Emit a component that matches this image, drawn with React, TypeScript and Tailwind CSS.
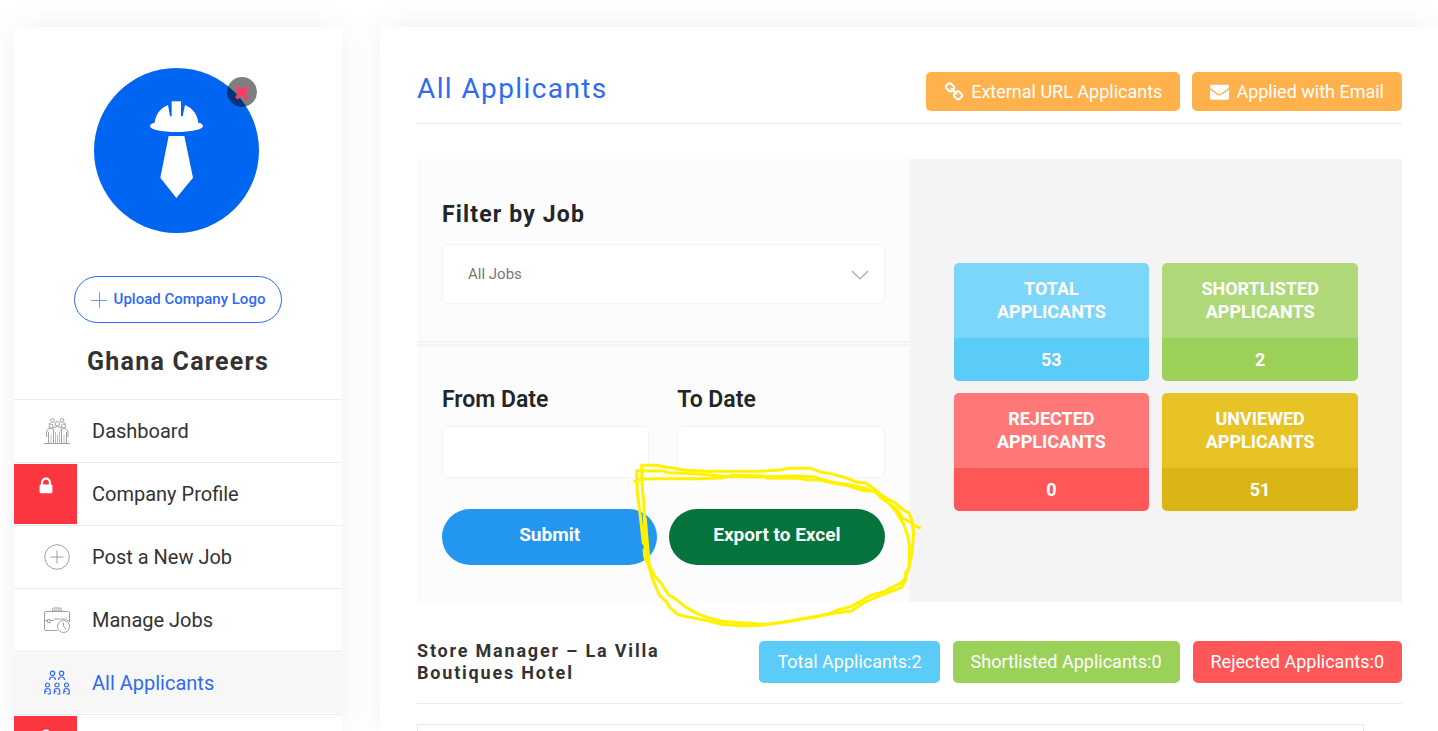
import type { ReactNode } from "react";

function FaGlyph({ d, className }: { d: string; className: string }) {
  return (
    <svg viewBox="0 0 1792 1792" fill="currentColor" aria-hidden="true" className={className}>
      <path d={d} />
    </svg>
  );
}

const LINK =
  "M1520 1216q0-40-28-68l-208-208q-28-28-68-28-42 0-72 32 3 3 19 18.5t21.5 21.5 15 19 13 25.5 3.5 27.5q0 40-28 68t-68 28q-15 0-27.5-3.5t-25.5-13-19-15-21.5-21.5-18.5-19q-33 31-33 73 0 40 28 68l206 207q27 27 68 27 40 0 68-26l147-146q28-28 28-67zm-703-705q0-40-28-68l-206-207q-28-28-68-28-39 0-68 27l-147 146q-28 28-28 67 0 40 28 68l208 208q27 27 68 27 42 0 72-31-3-3-19-18.5t-21.5-21.5-15-19-13-25.5-3.5-27.5q0-40 28-68t68-28q15 0 27.5 3.5t25.5 13 19 15 21.5 21.5 18.5 19q33-31 33-73zm895 705q0 120-85 203l-147 146q-83 83-203 83-121 0-204-85l-206-207q-83-83-83-203 0-123 88-209l-88-88q-86 88-208 88-120 0-204-84l-208-208q-84-84-84-204t85-203l147-146q83-83 203-83 121 0 204 85l206 207q83 83 83 203 0 123-88 209l88 88q86-88 208-88 120 0 204 84l208 208q84 84 84 204z";
const ENVELOPE =
  "M1792 710v794q0 66-47 113t-113 47h-1472q-66 0-113-47t-47-113v-794q44 49 101 87 362 246 497 345 57 42 92.5 65.5t94.5 48 110 24.5h2q51 0 110-24.5t94.5-48 92.5-65.5q170-123 498-345 57-39 100-87zm0-294q0 79-49 151t-122 123q-376 261-468 325-10 7-42.5 31t-54 38.5-52 32.5-57.5 27-50 9h-2q-23 0-50-9t-57.5-27-52-32.5-54-38.5-42.5-31q-91-64-262-182.5t-205-142.5q-62-42-117-115.5t-55-136.5q0-78 41.5-130t118.5-52h1472q65 0 112.5 47t47.5 113z";
const CLOSE =
  "M1490 1322q0 40-28 68l-136 136q-28 28-68 28t-68-28l-294-294-294 294q-28 28-68 28t-68-28l-136-136q-28-28-28-68t28-68l294-294-294-294q-28-28-28-68t28-68l136-136q28-28 68-28t68 28l294 294 294-294q28-28 68-28t68 28l136 136q28 28 28 68t-28 68l-294 294 294 294q28 28 28 68z";
const LOCK =
  "M640 768h512v-192q0-106-75-181t-181-75-181 75-75 181v192zm832 96v576q0 40-28 68t-68 28h-960q-40 0-68-28t-28-68v-576q0-40 28-68t68-28h32v-192q0-184 132-316t316-132 316 132 132 316v192h32q40 0 68 28t28 68z";

function CompanyLogo() {
  return (
    <svg viewBox="0 0 495 495" className="size-[165px]" role="img" aria-label="Ghana Careers">
      <circle cx="247.5" cy="247.5" r="247.5" fill="#0066f2" />
      <g fill="#fff">
        <path d="M168 174q0-8 14-10c3-24 16-43 40-53l6 34h5v-45h28v45h5l7-34c24 10 37 29 40 53q14 2 14 10c0 11-38 18-80 18s-79-7-79-18z" />
        <path d="M224 204h47l26 125-50 61-48-61z" />
      </g>
    </svg>
  );
}

function LineIcon({ children }: { children: ReactNode }) {
  return (
    <svg viewBox="0 0 26 26" className="size-[26px]" fill="none" stroke="currentColor" strokeWidth="1" aria-hidden="true">
      {children}
    </svg>
  );
}

function CrowdIcon() {
  return (
    <LineIcon>
      <path d="M0 25.5h26" />
      <circle cx="8.500" cy="2.500" r="1.800" />
      <circle cx="18" cy="2.500" r="1.800" />
      <circle cx="13.300" cy="5.800" r="2.200" />
      <circle cx="7" cy="8" r="2" />
      <circle cx="19.500" cy="8" r="2" />
      <path d="M2.500 19v-4.500Q2.500 10.500 7 10.500q2.500 0 3 2.500M24 19v-4.500q0-4-4.500-4-2.500 0-3 2.500M9 10q4.300-3 8.600 0M5.500 4.500v2M21 4.500v2" />
      <path d="M4.500 14v11.500M9.500 12v13.500M17.500 12v13.500M22.500 14v11.500" />
      <path d="M7 17v8.500M11.500 14v11.500M13.500 17v8.500M15.500 14v11.500M20 17v8.500" strokeWidth=".7" />
    </LineIcon>
  );
}

function PlusCircleIcon() {
  return (
    <LineIcon>
      <circle cx="13" cy="13" r="12.300" />
      <path d="M13 6.500v13M6.500 13h13" />
    </LineIcon>
  );
}

function BriefcaseClockIcon() {
  return (
    <LineIcon>
      <path d="M8.500 4.500v-2q0-1.500 1.500-1.500h6q1.500 0 1.500 1.500v2M10 4.500V3h6v1.500" />
      <path d="M13.500 23.500H2q-1.500 0-1.500-1.500V6Q.5 4.500 2 4.500h22.500q1 0 1 1.500v9.500" />
      <path d="M.5 13.500h2.500M6 13.500h4M10 12h13M23 13.500h2.500M3.500 12.500h2.500v3H3.500z" />
      <circle cx="19.500" cy="19.500" r="6" />
      <path d="M19.500 15.500v4l2.500 2.500" />
    </LineIcon>
  );
}

function Person({ x, y }: { x: number; y: number }) {
  return (
    <g transform={`translate(${x} ${y})`}>
      <circle cx="3.500" cy="2.500" r="2" />
      <path d="M.8 11.500V9q0-3 2.700-3t2.700 3v2.500H3.500M1 9h2" />
    </g>
  );
}

function TeamIcon() {
  return (
    <LineIcon>
      <g strokeWidth="1.200">
        <circle cx="8.500" cy="3.300" r="2.200" />
        <path d="M5.500 10q0-3 3-3t3 3" />
        <circle cx="17.500" cy="3.300" r="2.200" />
        <path d="M14.500 10q0-3 3-3t3 3" />
        <Person x={0} y={12.5} />
        <Person x={9.5} y={12.5} />
        <Person x={19} y={12.5} />
      </g>
    </LineIcon>
  );
}

type Item = { label: string; icon?: ReactNode; active?: boolean };

const items: Item[] = [
  { label: "Dashboard", icon: <CrowdIcon /> },
  { label: "Company Profile" },
  { label: "Post a New Job", icon: <PlusCircleIcon /> },
  { label: "Manage Jobs", icon: <BriefcaseClockIcon /> },
  { label: "All Applicants", icon: <TeamIcon />, active: true },
  { label: "" },
];

function NavItem({ label, icon, active }: Item) {
  return (
    <li className="border-t border-[#ebebeb] py-px">
      <a
        href="#"
        aria-label={label || "Locked"}
        className={`flex h-15 items-center text-xl ${active ? "bg-[#f7f7f7] text-[#2f6af5]" : "text-[#333]"}`}
      >
        {icon ? (
          <span className={`ml-[30px] mr-[22px] ${active ? "text-[#2f6af5]" : "text-[#a0a0a0]"}`}>{icon}</span>
        ) : (
          <span className="mr-[15px] flex h-full w-[63px] justify-center bg-[#fb3640] pt-3 text-white">
            <FaGlyph d={LOCK} className="size-[20px]" />
          </span>
        )}
        {label}
      </a>
    </li>
  );
}

function Sidebar() {
  return (
    <aside className="flex w-[328px] shrink-0 flex-col items-center bg-white pt-[41px] shadow-[0_0_30px_rgba(0,0,0,0.06)]">
      <div className="relative mr-[3px] shrink-0">
        <CompanyLogo />
        <button
          type="button"
          aria-label="Remove logo"
          className="absolute right-0.5 top-[9px] flex size-[30px] items-center justify-center rounded-full bg-black/50 text-[#ff3a68]"
        >
          <FaGlyph d={CLOSE} className="size-[20px]" />
        </button>
      </div>
      <button
        type="button"
        className="mt-[43px] flex h-[47px] shrink-0 items-center gap-[7px] rounded-full border border-[#2f6af5] px-4 text-[15px] font-medium text-[#2f6af5]"
      >
        <svg viewBox="0 0 16 16" className="size-4" stroke="currentColor" strokeWidth="1" opacity=".7" aria-hidden="true">
          <path d="M8.500 0v16M0 8.500h16" />
        </svg>
        Upload Company Logo
      </button>
      <h2 className="mb-[21px] mt-[23px] shrink-0 text-[25px] font-bold leading-8 tracking-wider text-[#333]">Ghana Careers</h2>
      <ul className="w-full">
        {items.map((item) => (
          <NavItem key={item.label} {...item} />
        ))}
      </ul>
    </aside>
  );
}

function PenCircle() {
  return (
    <svg
      viewBox="0 0 960 570"
      className="pointer-events-none absolute -left-[49px] -top-[59px] z-10 h-[190px] w-[320px] max-w-none"
      fill="none"
      stroke="#fff200"
      strokeWidth="9"
      strokeLinecap="round"
      strokeLinejoin="round"
      aria-hidden="true"
    >
      <path d="M80 330L75 290L72 170L66 100L65 46L112 46L138 52L155 53L190 60L260 64L420 64L480 60L505 55L572 55L605 67L640 73L680 84L712 97L735 98L765 118L790 140L822 156L850 180L866 188L876 210L881 250L876 310L866 355L856 385L840 401L808 416L790 426L752 436L715 458L695 469L665 477L625 492L560 504L480 518L440 523L360 518L305 514L262 502L230 490L195 470L165 446L146 435L125 402L102 375L88 346L84 300L80 255L76 205" />
      <path d="M70 280L66 245L60 190L52 130L50 62L128 63L145 68L230 71L330 80L410 81L535 78L580 80L606 88L650 99L700 106L740 116L775 129L800 151L828 185L850 220L862 255L868 285L868 350L856 372L858 390L845 412L808 426L780 437L735 456L695 483L640 490L590 500L520 512L410 527L360 527L305 523L255 511L210 502L175 494L152 475L136 452L118 435L97 385L86 345L75 325L72 300" />
      <path d="M44 94L60 88L100 86L235 86L310 83L340 76L433 78L440 84L535 85L560 89L600 90L635 98L680 106L730 122L765 124L785 145L830 176L848 204L872 217L885 228L899 233" />
    </svg>
  );
}

const stats = [
  { label: "TOTAL APPLICANTS", value: 53, top: "bg-[#7cd6f9]", bottom: "bg-[#5bcbf8]" },
  { label: "SHORTLISTED APPLICANTS", value: 2, top: "bg-[#afd978]", bottom: "bg-[#9bd159]" },
  { label: "REJECTED APPLICANTS", value: 0, top: "bg-[#ff7878]", bottom: "bg-[#ff5757]" },
  { label: "UNVIEWED APPLICANTS", value: 51, top: "bg-[#e8c325]", bottom: "bg-[#dab516]" },
];

const totals = [
  { label: "Total Applicants:2", color: "bg-[#5bcbf8]" },
  { label: "Shortlisted Applicants:0", color: "bg-[#9bd159]" },
  { label: "Rejected Applicants:0", color: "bg-[#ff5757]" },
];

const pill = "h-14 w-full rounded-full pb-[3px] text-[19px] font-bold text-white";
const field = "w-full rounded-md border border-[#f3f3f3] bg-white";
const dateLabel = "block pb-[11px] text-[23px] font-semibold leading-[30px] text-[#222629]";
const orange = "flex h-[39px] items-center gap-[7px] rounded-[5px] bg-[#ffb14b] px-[18px] text-lg text-white";

function Filters() {
  return (
    <form className="flex flex-col bg-[#fcfcfc]" onSubmit={(e) => e.preventDefault()}>
      <div className="border-b-2 border-[#f4f4f4] px-[25px] pb-[37px] pt-[41px]">
        <label htmlFor="job" className="block pb-3.5 text-[23px] font-bold leading-[30px] tracking-wider text-[#222629]">
          Filter by Job
        </label>
        <div className="relative">
          <select id="job" className={`${field} h-15 appearance-none px-[25px] text-[15px] text-[#777]`}>
            <option>All Jobs</option>
          </select>
          <svg viewBox="0 0 18 10" className="pointer-events-none absolute right-4 top-[26px] h-2.5 w-[18px]" fill="none" stroke="#a5a5a5" strokeWidth="1.200" aria-hidden="true">
            <path d="M1 1l8 8 8-8" />
          </svg>
        </div>
      </div>
      <div className="mt-px border-t-2 border-[#f4f4f4] px-[25px] pb-[37px] pt-[39px]">
        <div className="grid grid-cols-2 gap-7">
          <div>
            <label htmlFor="from" className={dateLabel}>From Date</label>
            <input id="from" type="text" className={`${field} block h-[52px] px-4`} />
          </div>
          <div>
            <label htmlFor="to" className={dateLabel}>To Date</label>
            <input id="to" type="text" className={`${field} block h-[52px] px-4`} />
          </div>
        </div>
        <div className="mt-[31px] grid grid-cols-2 gap-3">
          <button type="submit" className={`${pill} bg-[#2396ef]`}>Submit</button>
          <div className="relative">
            <button type="button" className={`${pill} bg-[#04733c]`}>Export to Excel</button>
            <PenCircle />
          </div>
        </div>
      </div>
    </form>
  );
}

export default function App() {
  return (
    <div className="flex h-screen gap-[38px] overflow-hidden bg-white pl-3.5 pt-[27px] font-[Roboto,sans-serif]">
      <Sidebar />
      <main className="min-w-0 flex-1 bg-white pl-[37px] pr-9 pt-[45px] shadow-[0_0_30px_rgba(0,0,0,0.06)]">
        <header className="flex items-center justify-between border-b border-[#ebebeb] pb-3">
          <h1 className="pb-1.5 text-[28px] leading-8 tracking-wider text-[#2f6af5]">All Applicants</h1>
          <div className="flex gap-3">
            <a href="#" className={orange}>
              <FaGlyph d={LINK} className="size-[20px]" />
              External URL Applicants
            </a>
            <a href="#" className={orange}>
              <FaGlyph d={ENVELOPE} className="size-[19px]" />
              Applied with Email
            </a>
          </div>
        </header>

        <section className="mt-[35px] grid grid-cols-2 bg-[#f4f4f4]">
          <Filters />
          <div className="grid auto-rows-min grid-cols-2 gap-x-[13px] gap-y-3 px-11 pt-26">
            {stats.map((s) => (
              <div key={s.label} className="overflow-hidden rounded-[5px] text-center text-lg font-bold leading-[23px] text-white">
                <div className={`px-7 pb-[15px] pt-3.5 ${s.top}`}>{s.label}</div>
                <div className={`py-2.5 ${s.bottom}`}>{s.value}</div>
              </div>
            ))}
          </div>
        </section>

        <section className="mt-[38px]">
          <div className="flex items-center justify-between border-b border-[#ebebeb] pb-[19px]">
            <h3 className="w-[280px] text-lg font-bold leading-[22px] tracking-widest text-[#333]">
              Store Manager – La Villa Boutiques Hotel
            </h3>
            <div className="flex gap-[13px]">
              {totals.map((t) => (
                <a key={t.label} href="#" className={`flex h-[42px] items-center rounded-[5px] px-[18px] text-lg text-white ${t.color}`}>
                  {t.label}
                </a>
              ))}
            </div>
          </div>
          <div className="mr-[38px] mt-5 h-40 border border-[#e8e8e8]" />
        </section>
      </main>
    </div>
  );
}
